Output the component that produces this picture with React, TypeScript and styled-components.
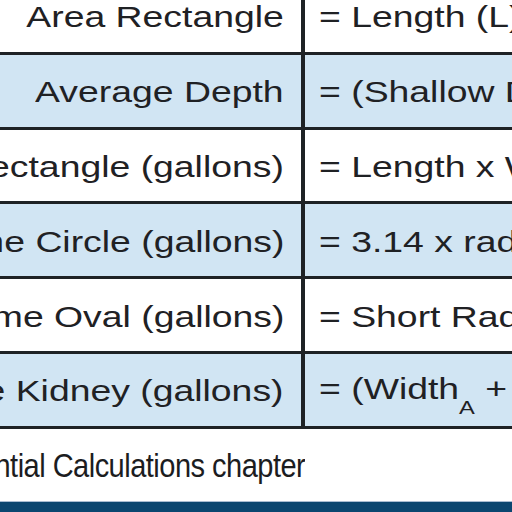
import styled, { createGlobalStyle } from "styled-components";

const GlobalStyle = createGlobalStyle`
  html, body {
    margin: 0;
    padding: 0;
    background: #ffffff;
  }
`;

type Formula = {
  label: string;
  expr: React.ReactNode;
  shaded: boolean;
};

const getRows = (): Formula[] => [
  { label: "Area Rectangle", expr: "= Length (L) x Width (W)", shaded: false },
  { label: "Average Depth", expr: "= (Shallow Depth + Deep Depth) ÷ 2", shaded: true },
  { label: "Volume Rectangle (gallons)", expr: "= Length x Width x Average Depth x 7.5", shaded: false },
  { label: "Volume Circle (gallons)", expr: "= 3.14 x radius x radius x Average Depth x 7.5", shaded: true },
  { label: "Volume Oval (gallons)", expr: "= Short Radius x Long Radius x 3.14 x Average Depth", shaded: false },
  {
    label: "Volume Kidney (gallons)",
    expr: (
      <>
        = (Width<Sub>A</Sub> + Width<Sub>B</Sub>) x Length x 0.45 x Average Depth
      </>
    ),
    shaded: true,
  },
];

const App = () => {
  const rows = getRows();
  return (
    <Page>
      <GlobalStyle />
      <Table>
        {rows.map((r) => (
          <Row key={r.label} $shaded={r.shaded}>
            <LabelCell>
              <CellText $align="right">{r.label}</CellText>
            </LabelCell>
            <ExprCell>
              <CellText $align="left">{r.expr}</CellText>
            </ExprCell>
          </Row>
        ))}
      </Table>

      {/* note under the table */}
      <Caption>
        <CaptionText>See the Essential Calculations chapter</CaptionText>
      </Caption>

      <FooterBar />
    </Page>
  );
};

export default App;

const Page = styled.div`
  width: 512px;
  height: 512px;
  overflow: hidden;
  display: flex;
  flex-direction: column;
  background: #ffffff;
  font-family: "Liberation Sans", Arial, sans-serif;
  color: #1f2124;
`;

const Table = styled.div`
  display: flex;
  flex-direction: column;
  margin-top: -20px;
`;

const Row = styled.div<{ $shaded: boolean }>`
  display: grid;
  grid-template-columns: 305px 1fr;
  height: 71.8px;
  border-bottom: 3px solid #1e2225;
  background: ${(p) => (p.$shaded ? "#d1e5f3" : "#ffffff")};
`;

const LabelCell = styled.div`
  display: flex;
  align-items: center;
  justify-content: flex-end;
  padding-right: 17px;
  border-right: 4px solid #1e2225;
  overflow: hidden;
  white-space: nowrap;
`;

const ExprCell = styled.div`
  display: flex;
  align-items: center;
  padding-left: 14px;
  overflow: hidden;
  white-space: nowrap;
`;

/* the source art is stretched sideways, so the type is widened to match */
const CellText = styled.span<{ $align: "left" | "right" }>`
  font-size: 30px;
  line-height: 1;
  flex-shrink: 0;
  display: inline-block;
  padding-top: 3px;
  transform: scaleX(1.245);
  transform-origin: ${(p) => p.$align} center;
`;

const Sub = styled.sub`
  font-size: 19px;
  vertical-align: -15px;
  line-height: 0;
`;

const Caption = styled.div`
  width: 305px;
  height: 72px;
  display: flex;
  align-items: center;
  justify-content: flex-end;
  overflow: hidden;
  white-space: nowrap;
`;

const CaptionText = styled.span`
  font-family: "Liberation Sans", Arial, sans-serif;
  font-size: 33px;
  letter-spacing: -0.6px;
  color: #1c1d1f;
  flex-shrink: 0;
  display: inline-block;
  padding-top: 2px;
  transform: scaleX(0.88);
  transform-origin: right center;
`;

const FooterBar = styled.div`
  flex: 1;
  border-top: 1px solid #a9bdd2;
  background: #0b4670;
`;
